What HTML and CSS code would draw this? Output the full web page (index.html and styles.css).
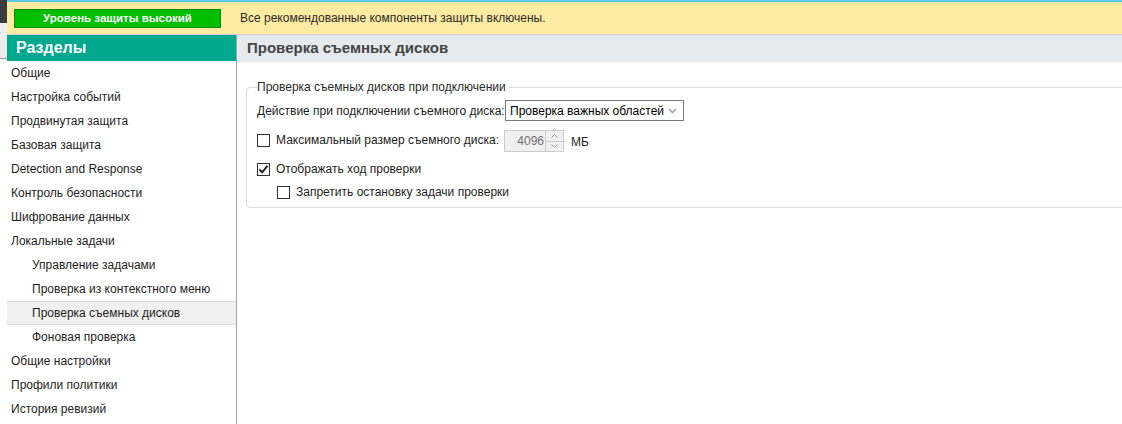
FILE: index.html
```html
<!DOCTYPE html>
<html lang="ru">
<head>
    <meta charset="UTF-8">
    <title>Проверка съемных дисков</title>
    <link rel="stylesheet" href="styles.css">
</head>
<body>
    <div class="edge">
        <div class="edge-dark"></div>
        <div class="edge-light"></div>
    </div>

    <div class="window">
        <!-- Status bar -->
        <div class="status-bar">
            <div class="status-badge">Уровень защиты высокий</div>
            <div class="status-text">Все рекомендованные компоненты защиты включены.</div>
        </div>

        <div class="main">
            <!-- Sections list -->
            <div class="sidebar">
                <div class="sidebar-title">Разделы</div>
                <ul class="sections">
                    <li>Общие</li>
                    <li>Настройка событий</li>
                    <li>Продвинутая защита</li>
                    <li>Базовая защита</li>
                    <li>Detection and Response</li>
                    <li>Контроль безопасности</li>
                    <li>Шифрование данных</li>
                    <li>Локальные задачи</li>
                    <li class="sub">Управление задачами</li>
                    <li class="sub">Проверка из контекстного меню</li>
                    <li class="sub active">Проверка съемных дисков</li>
                    <li class="sub">Фоновая проверка</li>
                    <li>Общие настройки</li>
                    <li>Профили политики</li>
                    <li>История ревизий</li>
                </ul>
            </div>

            <!-- Settings -->
            <div class="content">
                <div class="content-title">Проверка съемных дисков</div>

                <fieldset class="group">
                    <legend>Проверка съемных дисков при подключении</legend>

                    <div class="row">
                        <span class="label">Действие при подключении съемного диска:</span>
                        <div class="select">
                            <span>Проверка важных областей</span>
                            <svg width="9" height="6" viewBox="0 0 9 6"><path d="M1 1 L4.5 4.5 L8 1" fill="none" stroke="#9a9a9a" stroke-width="1.3"/></svg>
                        </div>
                    </div>

                    <div class="row row-size">
                        <label class="check"><span class="box"></span>Максимальный размер съемного диска:</label>
                        <div class="spin">
                            <span class="spin-value">4096</span>
                            <div class="spin-buttons">
                                <div class="spin-btn"><svg width="7" height="4" viewBox="0 0 7 4"><path d="M0.5 3.5 L3.5 0.5 L6.5 3.5" fill="none" stroke="#999" stroke-width="1"/></svg></div>
                                <div class="spin-btn"><svg width="7" height="4" viewBox="0 0 7 4"><path d="M0.5 0.5 L3.5 3.5 L6.5 0.5" fill="none" stroke="#999" stroke-width="1"/></svg></div>
                            </div>
                        </div>
                        <span class="unit">МБ</span>
                    </div>

                    <div class="row row-check">
                        <label class="check"><span class="box checked"><svg width="11" height="11" viewBox="0 0 11 11"><path d="M1.5 5.5 L4.2 8.3 L9.5 1.8" fill="none" stroke="#222" stroke-width="2"/></svg></span>Отображать ход проверки</label>
                    </div>

                    <div class="row row-nested">
                        <label class="check"><span class="box"></span>Запретить остановку задачи проверки</label>
                    </div>
                </fieldset>
            </div>
        </div>
    </div>
</body>
</html>
```

FILE: styles.css
```css
/* Page */
body {
    margin: 0;
    height: 424px;
    overflow: hidden;
    display: flex;
    font-family: 'Liberation Sans', Arial, sans-serif;
    font-size: 12px;
    color: #1e1e1e;
    background: #fff;
}

/* Strip of the window behind */
.edge {
    width: 7px;
    flex-shrink: 0;
}

.edge-dark {
    height: 23px;
    background: #3b3b3d;
}

.edge-light {
    height: 35px;
    background: #ededed;
    border-bottom: 1px solid #9a9a9a;
}

.window {
    flex: 1;
    display: flex;
    flex-direction: column;
    border-top: 2px solid #5cc6e6;
    min-width: 0;
}

/* Status bar */
.status-bar {
    height: 32px;
    background: #ffeba1;
    border-bottom: 1px solid #d9c7d3;
    display: flex;
    align-items: center;
}

.status-badge {
    margin-left: 7px;
    width: 205px;
    height: 17px;
    line-height: 17px;
    background: #00bf00;
    border: 1px solid #0a8a0a;
    color: #fff;
    font-weight: bold;
    font-size: 11.5px;
    text-align: center;
}

.status-text {
    margin-left: 19px;
    color: #2a2a2a;
}

/* Main area */
.main {
    flex: 1;
    display: flex;
    min-height: 0;
}

/* Sidebar */
.sidebar {
    width: 229px;
    flex-shrink: 0;
    border-right: 1px solid #a3a3a3;
}

.sidebar-title {
    height: 26px;
    line-height: 26px;
    background: #00a88d;
    color: #fff;
    font-size: 16px;
    font-weight: bold;
    padding-left: 9px;
}

.sections {
    list-style: none;
    margin: 0;
    padding: 0;
}

.sections li {
    height: 24px;
    line-height: 24px;
    padding-left: 4px;
    white-space: nowrap;
}

.sections li.sub {
    padding-left: 25px;
}

.sections li.active {
    background: #f0f0f0;
    border-top: 1px solid #dedede;
    border-bottom: 1px solid #dedede;
    height: 22px;
    line-height: 22px;
}

/* Content */
.content {
    flex: 1;
    min-width: 0;
    overflow: hidden;
}

.content-title {
    height: 26px;
    line-height: 26px;
    background: #e6eaed;
    border-bottom: 2px solid #f1f2f3;
    color: #454545;
    font-size: 15px;
    font-weight: bold;
    padding-left: 10px;
}

/* Settings group */
.group {
    margin: 17px -20px 0 9px;
    padding: 6px 0 8px 10px;
    border: 1px solid #d6dce2;
    border-radius: 4px;
}

.group legend {
    padding: 0 3px 0 0;
    margin-left: 0;
    color: #2a2a2a;
}

.row {
    display: flex;
    align-items: center;
}

.label {
    width: 248px;
}

.select {
    width: 167px;
    height: 19px;
    border: 1px solid #7a7a7a;
    display: flex;
    align-items: center;
    justify-content: space-between;
    padding: 0 6px 0 4px;
    color: #000;
}

.row-size {
    margin-top: 9px;
    align-items: flex-start;
}

.check {
    display: flex;
    align-items: center;
}

.row-size .check {
    width: 247px;
    padding-top: 3px;
}

.box {
    width: 11px;
    height: 11px;
    border: 1px solid #333;
    background: #fff;
    margin-right: 6px;
    display: flex;
    align-items: center;
    justify-content: center;
}

.spin {
    width: 58px;
    height: 20px;
    border: 1px solid #cccccc;
    background: #f0f0f0;
    display: flex;
}

.spin-value {
    flex: 1;
    text-align: right;
    line-height: 20px;
    color: #6d6d6d;
    padding-right: 1px;
}

.spin-buttons {
    width: 17px;
    display: flex;
    flex-direction: column;
    border-left: 1px solid #cccccc;
}

.spin-btn {
    flex: 1;
    display: flex;
    align-items: center;
    justify-content: center;
}

.spin-btn + .spin-btn {
    border-top: 1px solid #cccccc;
}

.unit {
    margin-left: 7px;
    line-height: 24px;
}

.row-check {
    margin-top: 8px;
}

.row-nested {
    margin-top: 9px;
    padding-left: 20px;
}
```
